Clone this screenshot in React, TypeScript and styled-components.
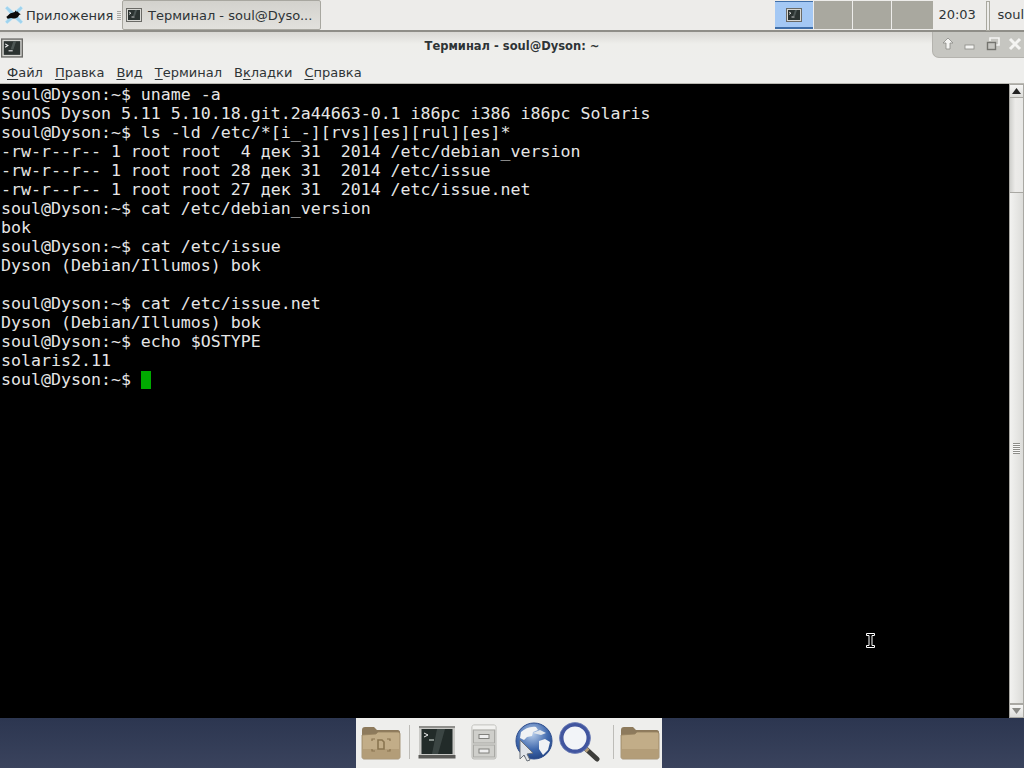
import { createGlobalStyle } from 'styled-components';
import styled from 'styled-components';

const GlobalStyle = createGlobalStyle`
  html, body { margin: 0; padding: 0; background: #000; }
  body { font-family: "DejaVu Sans", sans-serif; }
`;

const Screen = styled.div`
  position: relative;
  width: 1024px;
  height: 768px;
  overflow: hidden;
  display: flex;
  flex-direction: column;
`;

const Panel = styled.header`
  height: 30px;
  flex: none;
  display: flex;
  align-items: stretch;
  background: #edecea;
  border-bottom: 2px solid #8f8e88;
  font-size: 13px;
  color: #2e3436;
`;

const AppMenu = styled.div`
  width: 121px;
  display: flex;
  align-items: center;
  padding-left: 5px;
  box-sizing: border-box;
  gap: 3px;
`;

const Grip = styled.div`
  width: 5px;
  height: 10px;
  margin: 1px 0 0 1px;
  background: repeating-linear-gradient(#a9a8a2 0 1px, #edecea 1px 2px);
`;

const TaskButton = styled.div`
  width: 199px;
  margin: 0 0 0 1px;
  box-sizing: border-box;
  height: 30px;
  border: 1px solid #a8a7a0;
  border-radius: 2px;
  background: linear-gradient(#d3d2cd, #e2e1dd);
  display: flex;
  align-items: center;
  padding-left: 3px;
  gap: 6px;
  white-space: nowrap;
`;

const Spacer = styled.div`
  flex: 1;
`;

const Pager = styled.div`
  display: flex;
  gap: 1px;
  padding-top: 1px;
  height: 29px;
  box-sizing: border-box;
`;

const Workspace = styled.div<{ $active?: boolean; $width?: number }>`
  width: ${({ $width }) => $width ?? 38}px;
  height: 28px;
  box-sizing: border-box;
  display: flex;
  align-items: center;
  justify-content: center;
  background: ${({ $active }) => ($active ? '#a4c8f4' : '#a9a89f')};
  border-top: ${({ $active }) => ($active ? '1px solid #3f6ea8' : 'none')};
  border-bottom: ${({ $active }) => ($active ? '2px solid #3f6ea8' : 'none')};
`;

const Clock = styled.div`
  width: 46px;
  padding-left: 5px;
  display: flex;
  align-items: center;
  font-size: 13px;
  margin-top: -2px;
`;

const Separator = styled.div`
  width: 2px;
  height: 28px;
  margin: 1px 7px 0 2px;
  border: 1px solid #a9a89f;
  background: #edecea;
`;

const UserName = styled.div`
  display: flex;
  align-items: center;
  margin-top: -2px;
`;

const TitleBar = styled.div`
  position: relative;
  height: 29px;
  flex: none;
  background: linear-gradient(#d9d8d4 0, #eeeeeb 12px, #eeeeec 100%);
  display: flex;
  align-items: center;
  justify-content: center;
`;

const WindowIcon = styled.div`
  position: absolute;
  left: 1px;
  top: 5px;
  display: flex;
`;

const Title = styled.div`
  font-size: 11.5px;
  font-weight: bold;
  color: #2e3436;
  margin-top: -1px;
`;

const WindowButtons = styled.div`
  position: absolute;
  right: 0;
  top: 0;
  width: 92px;
  height: 26px;
  box-sizing: border-box;
  background: #c6c6c1;
  border-left: 1px solid #b4b3ae;
  border-bottom: 1px solid #b4b3ae;
  border-bottom-left-radius: 7px;
  display: flex;
  align-items: center;
  justify-content: space-between;
  padding: 0 2px 2px 8px;
`;

const MenuBar = styled.nav`
  height: 22px;
  flex: none;
  display: flex;
  align-items: center;
  gap: 12px;
  padding-left: 7px;
  background: #eeeeec;
  border-bottom: 1px solid #b9b8b2;
  font-size: 13px;
  color: #2e3436;
`;

const MenuItem = styled.span`
  white-space: nowrap;
  u { text-underline-offset: 2px; }
`;

const TerminalArea = styled.main`
  flex: 1;
  min-height: 0;
  display: flex;
  background: #000;
`;

const Output = styled.pre`
  flex: 1;
  margin: 0;
  padding: 1px 0 0 1px;
  font-family: "DejaVu Sans Mono", monospace;
  font-size: 16.6px;
  line-height: 19px;
  color: #e6e6e6;
`;

const TextCursor = styled.span`
  display: inline-block;
  width: 10px;
  height: 18px;
  vertical-align: -4px;
  background: #00aa00;
`;

const ScrollBar = styled.div`
  width: 15px;
  flex: none;
  display: flex;
  flex-direction: column;
  background: #e4e4e1;
  box-sizing: border-box;
  border-left: 1px solid #a9a8a3;
  border-right: 1px solid #a9a8a3;
`;

const ScrollButton = styled.div`
  height: 14px;
  flex: none;
  display: flex;
  align-items: center;
  justify-content: center;
  background: linear-gradient(#f6f6f5, #dcdcd9);
  border-top: 1px solid #a9a8a3;
  border-bottom: 1px solid #a9a8a3;
  box-sizing: border-box;
`;

const ScrollTrack = styled.div`
  flex: none;
  height: 94px;
  background: linear-gradient(90deg, #d0d0cd, #ecebe9 40%, #e8e8e6);
`;

const ScrollThumb = styled.div`
  flex: 1;
  display: flex;
  align-items: center;
  justify-content: center;
  background: linear-gradient(90deg, #f2f2f0, #dcdcd9);
  border-top: 1px solid #a9a8a3;
  border-bottom: 1px solid #a9a8a3;
`;

const ThumbGrip = styled.div`
  width: 7px;
  height: 11px;
  background: repeating-linear-gradient(#8d8d89 0 1px, #f8f8f7 1px 2px);
`;

const Desktop = styled.footer`
  height: 50px;
  flex: none;
  display: flex;
  justify-content: center;
  background: linear-gradient(#2c3650, #3a435d);
`;

const Dock = styled.div`
  width: 306px;
  box-sizing: border-box;
  margin-right: 6px;
  background: #eeeeec;
  display: flex;
  align-items: center;
  padding: 0 0 3px 5px;
`;

const DockItem = styled.div<{ $width: number }>`
  width: ${({ $width }) => $width}px;
  display: flex;
  justify-content: center;
`;

const DockDivider = styled.div`
  width: 1px;
  height: 34px;
  background: #bdbcb8;
`;

const MousePointer = styled.div`
  position: absolute;
  left: 865px;
  top: 632px;
  display: flex;
`;

function TermIcon({ size = 16 }: { size?: number }) {
  return (
    <svg width={size} height={size} viewBox="0 0 16 16">
      <rect x="0.5" y="1.5" width="15" height="13" fill="#d8d8d4" stroke="#6a6a66" />
      <rect x="2" y="3" width="12" height="10" fill="#2b3230" />
      <path d="M3 5l2 1.2L3 7.4" stroke="#eee" strokeWidth="0.8" fill="none" />
      <path d="M5.5 10h3" stroke="#c8c8c8" strokeWidth="1" />
      <path d="M9 3l-2 6h2l2-6z" fill="#4d5654" />
    </svg>
  );
}

function XfceLogo() {
  return (
    <svg width="24" height="26" viewBox="0 0 24 26">
      <path d="M3 1l9 8 9-8 3 3-8 9 8 9-3 3-9-8-9 8-3-3 8-9L0 4z" fill="#9fd3ee" stroke="#dff0f8" strokeWidth="0.8" />
      <path d="M2 15c3-1 4-5 8-5l3-1 1-2 2 2 1-1 1 2 3 2-2 1-2 3c-3 2-7 2-9 1l-4 1c-1 0-2-2-2-3z" fill="#0a0a0a" />
    </svg>
  );
}

function Folder({ emblem }: { emblem?: boolean }) {
  return (
    <svg width="40" height="36" viewBox="0 0 40 36">
      <path d="M1 6c0-2 1-3 3-3h9l3 3h21c1 0 2 1 2 2v6H1z" fill="#8d7a5c" />
      <path d="M1 11l14-1 2-2h20c1 0 2 1 2 2v23c0 1-1 2-2 2H3c-1 0-2-1-2-2z" fill="#c2ad88" stroke="#95825f" strokeWidth="0.8" />
      <rect x="2" y="25" width="36" height="9" fill="#b39d78" />
      {emblem && (
        <g fill="none" stroke="#8a7550" strokeWidth="1.2">
          <path d="M11 17v-2h3M26 15h3v2M11 25v2h3M26 27h3v-2" />
          <path d="M17 16h4l2 2v7h-6z" strokeWidth="1.6" />
        </g>
      )}
    </svg>
  );
}

function DockTerminal() {
  return (
    <svg width="38" height="36" viewBox="0 0 38 36">
      <rect x="1" y="2" width="36" height="32" rx="1" fill="#c9c9c6" />
      <rect x="0.5" y="31" width="37" height="3.5" fill="#5b5b58" />
      <rect x="1" y="2" width="36" height="2" fill="#8f8f8c" />
      <rect x="3.5" y="5" width="31" height="25" fill="#222b29" />
      <path d="M19 5h8l-7 25h-6z" fill="#3b4543" />
      <path d="M6 9l4 2-4 2" stroke="#f2f2f2" strokeWidth="1" fill="none" />
      <path d="M11 16h5" stroke="#a9b2ae" strokeWidth="1.4" />
    </svg>
  );
}

function Cabinet() {
  return (
    <svg width="26" height="36" viewBox="0 0 26 36">
      <rect x="1" y="1" width="24" height="34" rx="2" fill="#dededb" stroke="#b9b9b5" />
      <rect x="1.5" y="1.5" width="23" height="4" fill="#f2f2f0" />
      <rect x="2.5" y="6" width="21" height="13" fill="#cfcfcb" stroke="#a9a9a5" />
      <rect x="2.5" y="21" width="21" height="12" fill="#cfcfcb" stroke="#a9a9a5" />
      <rect x="8" y="10.5" width="10" height="4" fill="#eee" stroke="#80807c" />
      <rect x="8" y="25" width="10" height="4" fill="#eee" stroke="#80807c" />
    </svg>
  );
}

function Globe() {
  return (
    <svg width="40" height="40" viewBox="0 0 40 40">
      <defs>
        <radialGradient id="sea" cx="0.45" cy="0.3" r="0.8">
          <stop offset="0" stopColor="#b7cdea" />
          <stop offset="0.55" stopColor="#3f68ad" />
          <stop offset="1" stopColor="#1b3a78" />
        </radialGradient>
      </defs>
      <circle cx="21" cy="19" r="18" fill="url(#sea)" stroke="#2d4c8c" />
      <path d="M8 10c4-3 9-6 15-5l2 3-5 2-1 4-5 1-3 3-4-2zM26 19l6-2 5 3-2 8-5 5-4-6z" fill="#f0f2f4" />
      <path d="M20 11l7-3 6 3-5 2z" fill="#dfe5ec" />
      <path d="M7 18l13 13-6 1 3 6-3 1-3-6-4 4z" fill="#dfe3e8" stroke="#6b7178" strokeWidth="1" />
    </svg>
  );
}

function Magnifier() {
  return (
    <svg width="42" height="40" viewBox="0 0 42 40">
      <path d="M26 26l12 11" stroke="#3d3d3a" strokeWidth="5" strokeLinecap="round" />
      <path d="M25 25l4 4" stroke="#b8a27c" strokeWidth="4" />
      <circle cx="16" cy="16" r="13.5" fill="#f2f4f8" stroke="#41559f" strokeWidth="4" />
      <circle cx="16" cy="16" r="15.5" fill="none" stroke="#6f80b8" strokeWidth="0.8" />
    </svg>
  );
}

const output = `soul@Dyson:~$ uname -a
SunOS Dyson 5.11 5.10.18.git.2a44663-0.1 i86pc i386 i86pc Solaris
soul@Dyson:~$ ls -ld /etc/*[i_-][rvs][es][rul][es]*
-rw-r--r-- 1 root root  4 дек 31  2014 /etc/debian_version
-rw-r--r-- 1 root root 28 дек 31  2014 /etc/issue
-rw-r--r-- 1 root root 27 дек 31  2014 /etc/issue.net
soul@Dyson:~$ cat /etc/debian_version
bok
soul@Dyson:~$ cat /etc/issue
Dyson (Debian/Illumos) bok

soul@Dyson:~$ cat /etc/issue.net
Dyson (Debian/Illumos) bok
soul@Dyson:~$ echo $OSTYPE
solaris2.11
soul@Dyson:~$ `;

export default function App() {
  return (
    <Screen>
      <GlobalStyle />
      <Panel>
        <AppMenu>
          <XfceLogo />
          <span>Приложения</span>
          <Grip />
        </AppMenu>
        <TaskButton>
          <TermIcon />
          <span>Терминал - soul@Dyso...</span>
        </TaskButton>
        <Spacer />
        <Pager>
          <Workspace $active>
            <TermIcon />
          </Workspace>
          <Workspace />
          <Workspace />
          <Workspace $width={41} />
        </Pager>
        <Clock>20:03</Clock>
        <Separator />
        <UserName>soul</UserName>
      </Panel>
      <TitleBar>
        <WindowIcon>
          <TermIcon size={22} />
        </WindowIcon>
        <Title>Терминал - soul@Dyson: ~</Title>
        <WindowButtons>
          <svg width="14" height="14" viewBox="0 0 14 14">
            <path d="M7 1l5 5H9v6H5V6H2z" fill="#f4f4f2" stroke="#8a8a86" strokeWidth="0.8" />
          </svg>
          <svg width="14" height="14" viewBox="0 0 14 14">
            <rect x="2" y="8" width="9" height="4" fill="#f4f4f2" stroke="#8a8a86" strokeWidth="0.8" />
          </svg>
          <svg width="14" height="14" viewBox="0 0 14 14">
            <path d="M4 4V1h9v7h-3" fill="none" stroke="#f4f4f2" strokeWidth="1.6" />
            <rect x="1.5" y="5.5" width="8" height="7" fill="none" stroke="#74746f" strokeWidth="1.4" />
          </svg>
          <svg width="14" height="14" viewBox="0 0 14 14">
            <path d="M2 2l10 10M12 2L2 12" stroke="#f4f4f2" strokeWidth="3" />
          </svg>
        </WindowButtons>
      </TitleBar>
      <MenuBar>
        <MenuItem><u>Ф</u>айл</MenuItem>
        <MenuItem><u>П</u>равка</MenuItem>
        <MenuItem><u>В</u>ид</MenuItem>
        <MenuItem><u>Т</u>ерминал</MenuItem>
        <MenuItem>В<u>к</u>ладки</MenuItem>
        <MenuItem><u>С</u>правка</MenuItem>
      </MenuBar>
      <TerminalArea>
        <Output>
          {output}
          <TextCursor />
        </Output>
        <ScrollBar>
          <ScrollButton>
            <svg width="9" height="6" viewBox="0 0 9 6"><path d="M4.5 0L9 6H0z" fill="#222" /></svg>
          </ScrollButton>
          <ScrollTrack />
          <ScrollThumb>
            <ThumbGrip />
          </ScrollThumb>
          <ScrollButton>
            <svg width="9" height="6" viewBox="0 0 9 6"><path d="M0 0h9L4.5 6z" fill="#8a8a86" /></svg>
          </ScrollButton>
        </ScrollBar>
      </TerminalArea>
      <Desktop>
        <Dock>
          <DockItem $width={40}><Folder emblem /></DockItem>
          <DockItem $width={17}><DockDivider /></DockItem>
          <DockItem $width={38}><DockTerminal /></DockItem>
          <DockItem $width={57}><Cabinet /></DockItem>
          <DockItem $width={40}><Globe /></DockItem>
          <DockItem $width={56}><Magnifier /></DockItem>
          <DockItem $width={10}><DockDivider /></DockItem>
          <DockItem $width={44}><Folder /></DockItem>
        </Dock>
      </Desktop>
      <MousePointer>
        <svg width="11" height="17" viewBox="0 0 11 17">
          <path d="M1.5 1.5h8v2H7v10h2.5v2h-8v-2H4v-10H1.5z" fill="#000" stroke="#fff" strokeWidth="1" />
        </svg>
      </MousePointer>
    </Screen>
  );
}
